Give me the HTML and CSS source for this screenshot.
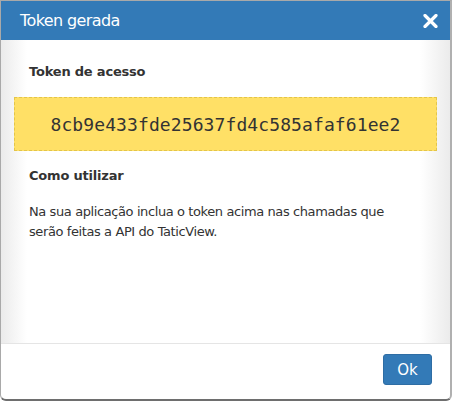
FILE: index.html
```html
<!DOCTYPE html>
<html lang="pt">
<head>
<meta charset="utf-8">
<title>Token gerada</title>
<link rel="stylesheet" href="styles.css">
</head>
<body>
<div class="dialog">
  <header class="dialog-header">
    <h1 class="dialog-title">Token gerada</h1>
    <button class="close-btn" aria-label="Fechar">
      <svg width="15" height="14" viewBox="0 0 15 14"><path d="M2 1.5 L13 12.5 M13 1.5 L2 12.5" stroke="#fff" stroke-width="3.2" stroke-linecap="round"/></svg>
    </button>
  </header>
  <main class="dialog-body">
    <h2 class="section-title">Token de acesso</h2>
    <div class="token-box">8cb9e433fde25637fd4c585afaf61ee2</div>
    <h2 class="section-title section-title--second">Como utilizar</h2>
    <p class="usage-text">Na sua aplicação inclua o token acima nas chamadas que serão feitas a API do TaticView.</p>
  </main>
  <footer class="dialog-footer">
    <button class="ok-btn">Ok</button>
  </footer>
</div>
</body>
</html>
```
FILE: styles.css
```css
* { box-sizing: border-box; }
html, body { margin: 0; padding: 0; background: #fff; }
body { font-family: "DejaVu Sans", Verdana, sans-serif; color: #333; }

.dialog {
  width: 452px;
  height: 401px;
  border: 1px solid #a9a9a9;
  border-right: 2px solid #b0b0b0;
  border-bottom: 2px solid #6e6e6e;
  border-radius: 0 0 6px 6px;
  display: flex;
  flex-direction: column;
  overflow: hidden;
  background: #fff;
}

.dialog-header {
  height: 39px;
  flex: none;
  background: #337ab7;
  display: flex;
  align-items: center;
  justify-content: space-between;
  padding: 0 12px 0 19px;
}
.dialog-title {
  margin: 0;
  font-size: 16px;
  font-weight: normal;
  color: #fff;
  letter-spacing: -0.6px;
}
.close-btn {
  border: 0;
  background: none;
  padding: 0;
  width: 15px;
  height: 14px;
  display: block;
  cursor: pointer;
}
.close-btn svg { display: block; }

.dialog-body {
  flex: 1;
  padding: 22px 13px 0 13px;
  background: linear-gradient(to right, #ebebeb 0, #fff 26px, #fff calc(100% - 30px), #ebebeb 100%);
}
.section-title {
  margin: 0 0 15px;
  padding-left: 15px;
  font-size: 13px;
  line-height: 20px;
  font-weight: bold;
  letter-spacing: -0.2px;
}
.section-title--second { margin-bottom: 16px; }

.token-box {
  height: 54px;
  background: #ffe066;
  border: 1px dashed #e3c54a;
  display: flex;
  align-items: center;
  justify-content: center;
  font-family: "DejaVu Sans Mono", "Liberation Mono", monospace;
  font-size: 18px;
  letter-spacing: 0.1px;
  color: #333;
  margin-bottom: 15px;
}

.usage-text {
  margin: 0;
  padding-left: 15px;
  padding-right: 40px;
  font-size: 13px;
  line-height: 20px;
  letter-spacing: -0.4px;
}

.dialog-footer {
  height: 56px;
  flex: none;
  border-top: 1px solid #e5e5e5;
  display: flex;
  justify-content: flex-end;
  align-items: flex-start;
  padding: 10px 18px 0 0;
}
.ok-btn {
  width: 49px;
  height: 31px;
  background: #337ab7;
  border: 1px solid #2e6da4;
  border-radius: 3px;
  color: #fff;
  font-family: "DejaVu Sans", Verdana, sans-serif;
  font-size: 15px;
  padding: 0;
  cursor: pointer;
}
```
